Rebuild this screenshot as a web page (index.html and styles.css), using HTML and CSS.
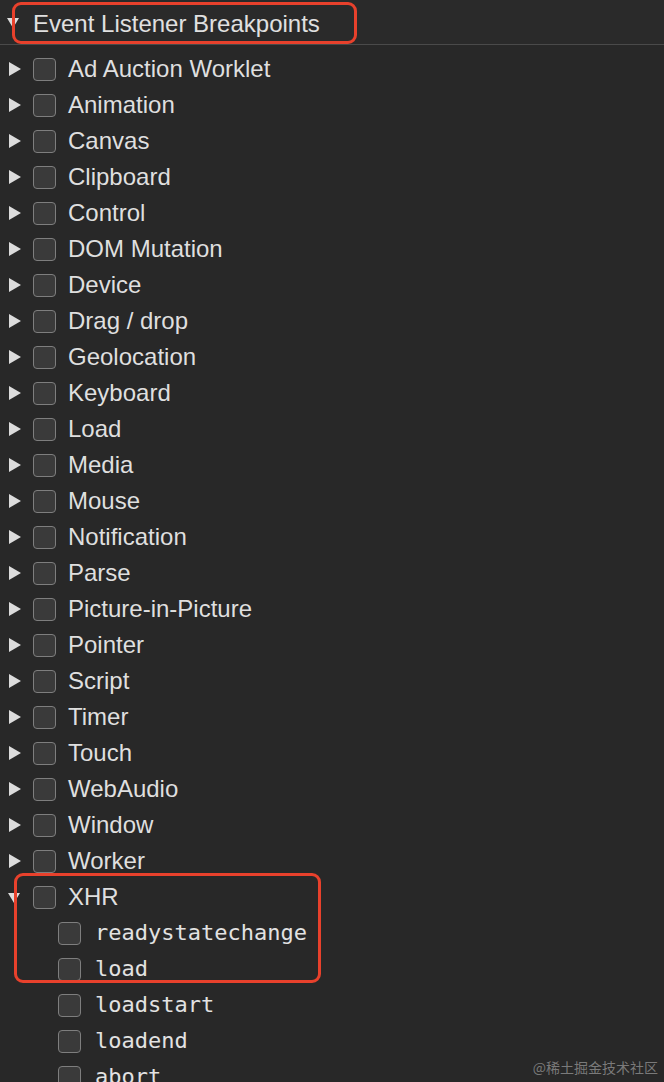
FILE: index.html
```html
<!DOCTYPE html>
<html>
<head>
<meta charset="utf-8">
<link rel="stylesheet" href="styles.css">
</head>
<body>
<div class="panel">
  <div class="header">
    <span class="tri down"></span>
    <span class="title">Event Listener Breakpoints</span>
    <div class="mark mark-header"></div>
  </div>
  <ul class="list">
    <li class="row"><span class="tri right"></span><span class="box"></span><span class="label">Ad Auction Worklet</span></li>
    <li class="row"><span class="tri right"></span><span class="box"></span><span class="label">Animation</span></li>
    <li class="row"><span class="tri right"></span><span class="box"></span><span class="label">Canvas</span></li>
    <li class="row"><span class="tri right"></span><span class="box"></span><span class="label">Clipboard</span></li>
    <li class="row"><span class="tri right"></span><span class="box"></span><span class="label">Control</span></li>
    <li class="row"><span class="tri right"></span><span class="box"></span><span class="label">DOM Mutation</span></li>
    <li class="row"><span class="tri right"></span><span class="box"></span><span class="label">Device</span></li>
    <li class="row"><span class="tri right"></span><span class="box"></span><span class="label">Drag / drop</span></li>
    <li class="row"><span class="tri right"></span><span class="box"></span><span class="label">Geolocation</span></li>
    <li class="row"><span class="tri right"></span><span class="box"></span><span class="label">Keyboard</span></li>
    <li class="row"><span class="tri right"></span><span class="box"></span><span class="label">Load</span></li>
    <li class="row"><span class="tri right"></span><span class="box"></span><span class="label">Media</span></li>
    <li class="row"><span class="tri right"></span><span class="box"></span><span class="label">Mouse</span></li>
    <li class="row"><span class="tri right"></span><span class="box"></span><span class="label">Notification</span></li>
    <li class="row"><span class="tri right"></span><span class="box"></span><span class="label">Parse</span></li>
    <li class="row"><span class="tri right"></span><span class="box"></span><span class="label">Picture-in-Picture</span></li>
    <li class="row"><span class="tri right"></span><span class="box"></span><span class="label">Pointer</span></li>
    <li class="row"><span class="tri right"></span><span class="box"></span><span class="label">Script</span></li>
    <li class="row"><span class="tri right"></span><span class="box"></span><span class="label">Timer</span></li>
    <li class="row"><span class="tri right"></span><span class="box"></span><span class="label">Touch</span></li>
    <li class="row"><span class="tri right"></span><span class="box"></span><span class="label">WebAudio</span></li>
    <li class="row"><span class="tri right"></span><span class="box"></span><span class="label">Window</span></li>
    <li class="row"><span class="tri right"></span><span class="box"></span><span class="label">Worker</span></li>
    <li class="group">
      <div class="mark mark-xhr"></div>
      <div class="row"><span class="tri down small"></span><span class="box"></span><span class="label">XHR</span></div>
      <div class="row child"><span class="box"></span><span class="label mono">readystatechange</span></div>
      <div class="row child"><span class="box"></span><span class="label mono">load</span></div>
      <div class="row child"><span class="box"></span><span class="label mono">loadstart</span></div>
      <div class="row child"><span class="box"></span><span class="label mono">loadend</span></div>
      <div class="row child"><span class="box"></span><span class="label mono">abort</span></div>
    </li>
  </ul>
  <div class="watermark">@稀土掘金技术社区</div>
</div>
</body>
</html>
```
FILE: styles.css
```css
* { box-sizing: border-box; }
html, body {
  margin: 0;
  padding: 0;
  background: #282828;
  height: 100%;
  overflow: hidden;
}
.panel {
  position: relative;
  width: 664px;
  height: 1082px;
  background: #282828;
  font-family: "Liberation Sans", Arial, sans-serif;
  color: #dfdfdf;
  overflow: hidden;
}
.header {
  position: relative;
  height: 45px;
  border-bottom: 1px solid #4a4a4a;
  display: flex;
  align-items: center;
  padding-left: 7px;
  background: #2a2a2a;
}
.title {
  font-size: 24px;
  margin-left: 14px;
  margin-top: 3px;
  color: #e0e0e0;
  line-height: 1;
}
.tri {
  display: inline-block;
  width: 0;
  height: 0;
  flex: none;
}
.tri.right {
  border-top: 7px solid transparent;
  border-bottom: 7px solid transparent;
  border-left: 12px solid #dcdcdc;
}
.tri.down {
  border-left: 6px solid transparent;
  border-right: 6px solid transparent;
  border-top: 10px solid #dcdcdc;
  margin-top: 2px;
}
.list {
  list-style: none;
  margin: 0;
  padding: 6px 0 0 0;
}
.row {
  height: 36px;
  display: flex;
  align-items: center;
  padding-left: 9px;
}
.row .box {
  width: 23px;
  height: 23px;
  border: 1.5px solid #7e7e7e;
  border-radius: 4px;
  background: #3a3a3a;
  margin-left: 12px;
  flex: none;
}
.row .tri.down.small {
  margin-left: -1px;
  margin-right: 1px;
}
.row.child {
  padding-left: 58px;
}
.row.child .box {
  margin-left: 0;
}
.label {
  font-size: 24px;
  margin-left: 12px;
  line-height: 1;
  white-space: nowrap;
}
.mono {
  font-family: "DejaVu Sans Mono", "Liberation Mono", monospace;
  font-size: 22px;
  margin-left: 14px;
  color: #e2e2e2;
}
.group {
  position: relative;
}
.mark {
  position: absolute;
  border: 3px solid #e8412c;
  border-radius: 9px;
  pointer-events: none;
}
.mark-header {
  left: 12px;
  top: 2px;
  width: 345px;
  height: 42px;
}
.mark-xhr {
  left: 14px;
  top: -6px;
  width: 307px;
  height: 110px;
  z-index: 2;
}
.watermark {
  position: absolute;
  right: 6px;
  bottom: 5px;
  font-family: "Noto Sans CJK SC", sans-serif;
  font-size: 14px;
  color: rgba(150, 150, 150, 0.75);
}
```
